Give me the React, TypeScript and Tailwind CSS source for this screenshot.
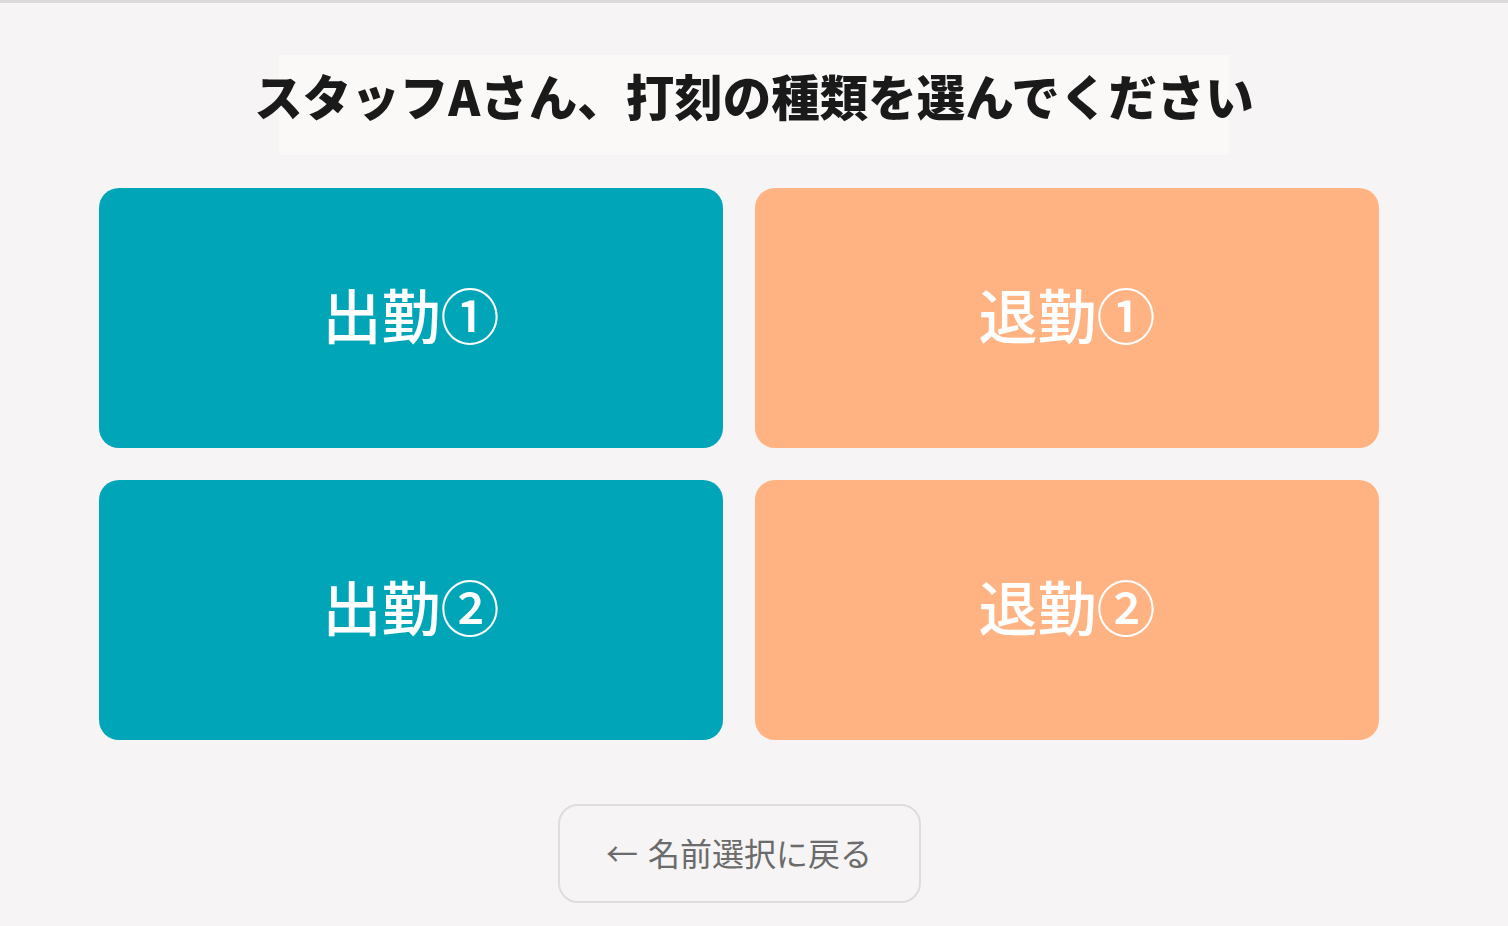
import React from 'react';

const buttons = [
  { label: '出勤①', kind: 'in' },
  { label: '退勤①', kind: 'out' },
  { label: '出勤②', kind: 'in' },
  { label: '退勤②', kind: 'out' },
];

const App: React.FC = () => {
  return (
    <div className="min-h-screen w-full bg-[#f6f4f4] border-t-[3px] border-[#dcdada] font-['Noto_Sans_CJK_JP',sans-serif]">
      <div className="pt-[52px] flex justify-center">
        <div className="w-[950px] h-[100px] bg-[#faf9f8] flex items-center justify-center pb-[20px]">
          <h1 className="whitespace-nowrap text-[48.5px] font-black text-[#1a1a1a] leading-none">
            スタッフAさん、打刻の種類を選んでください
          </h1>
        </div>
      </div>

      <div className="pl-[99px] pr-[129px] pt-[33px]">
        <div className="grid grid-cols-2 gap-[32px]">
          {buttons.map((b) => (
            <button
              key={b.label}
              className={
                'h-[260px] rounded-[20px] flex items-center justify-center pb-[10px] text-white text-[59px] font-medium leading-none ' +
                (b.kind === 'in' ? 'bg-[#00a6b8]' : 'bg-[#ffb382]')
              }
            >
              {b.label}
            </button>
          ))}
        </div>

        <div className="flex justify-center pt-[64px]">
          <button className="w-[363px] h-[99px] rounded-[20px] border-2 border-[#dedcdc] bg-[#f6f4f4] text-[#6b6b6b] text-[32px] leading-none flex items-center justify-center pb-[4px]">
            <span className="mr-[10px]">←</span>
            <span>名前選択に戻る</span>
          </button>
        </div>
      </div>
    </div>
  );
};

export default App;
